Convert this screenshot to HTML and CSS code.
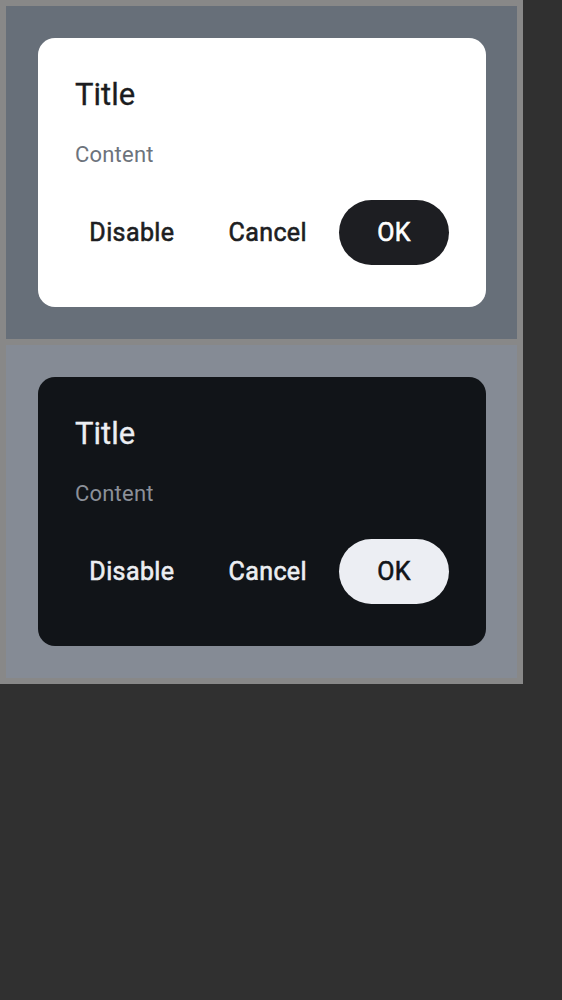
FILE: index.html
```html
<!DOCTYPE html>
<html>

<head>
    <meta charset="UTF-8">
    <meta name="viewport" content="width=device-width, initial-scale=1.0">
    <title>Dialogs</title>
    <link rel="stylesheet" href="styles.css">
</head>

<body>
    <div class="preview">
        <div class="preview__panel preview__panel--light">
            <div class="dialog dialog--light">
                <h2 class="dialog__title">Title</h2>
                <p class="dialog__content">Content</p>
                <div class="dialog__actions">
                    <button class="dialog__button dialog__button--text">Disable</button>
                    <button class="dialog__button dialog__button--text">Cancel</button>
                    <button class="dialog__button dialog__button--filled">OK</button>
                </div>
            </div>
        </div>
        <div class="preview__panel preview__panel--dark">
            <div class="dialog dialog--dark">
                <h2 class="dialog__title">Title</h2>
                <p class="dialog__content">Content</p>
                <div class="dialog__actions">
                    <button class="dialog__button dialog__button--text">Disable</button>
                    <button class="dialog__button dialog__button--text">Cancel</button>
                    <button class="dialog__button dialog__button--filled">OK</button>
                </div>
            </div>
        </div>
    </div>
</body>

</html>
```

FILE: styles.css
```css
*,
*::before,
*::after {
    box-sizing: border-box;
    margin: 0;
    padding: 0;
}

body {
    background-color: #303030;
    font-family: Roboto, "Noto Sans", sans-serif;
    height: 100vh;
}

button {
    border: none;
    background: none;
    font-family: inherit;
    cursor: pointer;
}

.preview {
    display: flex;
    flex-direction: column;
    gap: 6px;
    width: 523px;
    padding: 6px;
    background-color: #888888;
}

.preview__panel {
    height: 333px;
    padding: 32px;
}

.preview__panel--light {
    background-color: #676f79;
}

.preview__panel--dark {
    background-color: #858b95;
}

.dialog {
    width: 448px;
    height: 269px;
    padding: 39px 37px 0 37px;
    border-radius: 17px;
}

.dialog__title {
    font-size: 31px;
    font-weight: 400;
    line-height: 36px;
    -webkit-text-stroke: 0.3px currentColor;
}

.dialog__content {
    margin-top: 29px;
    font-size: 22px;
    line-height: 26px;
    letter-spacing: 0.2px;
}

.dialog__actions {
    display: flex;
    justify-content: flex-end;
    gap: 10px;
    margin-top: 32px;
}

.dialog__button {
    flex-shrink: 0;
    height: 65px;
    font-size: 25px;
    font-weight: 400;
    line-height: 65px;
    letter-spacing: 0.4px;
    border-radius: 33px;
    -webkit-text-stroke: 0.6px currentColor;
}

.dialog__button--text {
    padding: 0 22px;
}

.dialog__button--filled {
    width: 110px;
}

.dialog--light {
    background-color: #ffffff;
}

.dialog--light .dialog__title {
    color: #1b1c20;
}

.dialog--light .dialog__content {
    color: #6d737c;
}

.dialog--light .dialog__button--text {
    color: #1d1e22;
}

.dialog--light .dialog__button--filled {
    background-color: #1d1e22;
    color: #ffffff;
}

.dialog--dark {
    background-color: #111418;
}

.dialog--dark .dialog__title {
    color: #eceef2;
}

.dialog--dark .dialog__content {
    color: #8b9099;
}

.dialog--dark .dialog__button--text {
    color: #eceef2;
}

.dialog--dark .dialog__button--filled {
    background-color: #eceef3;
    color: #111418;
}
```
